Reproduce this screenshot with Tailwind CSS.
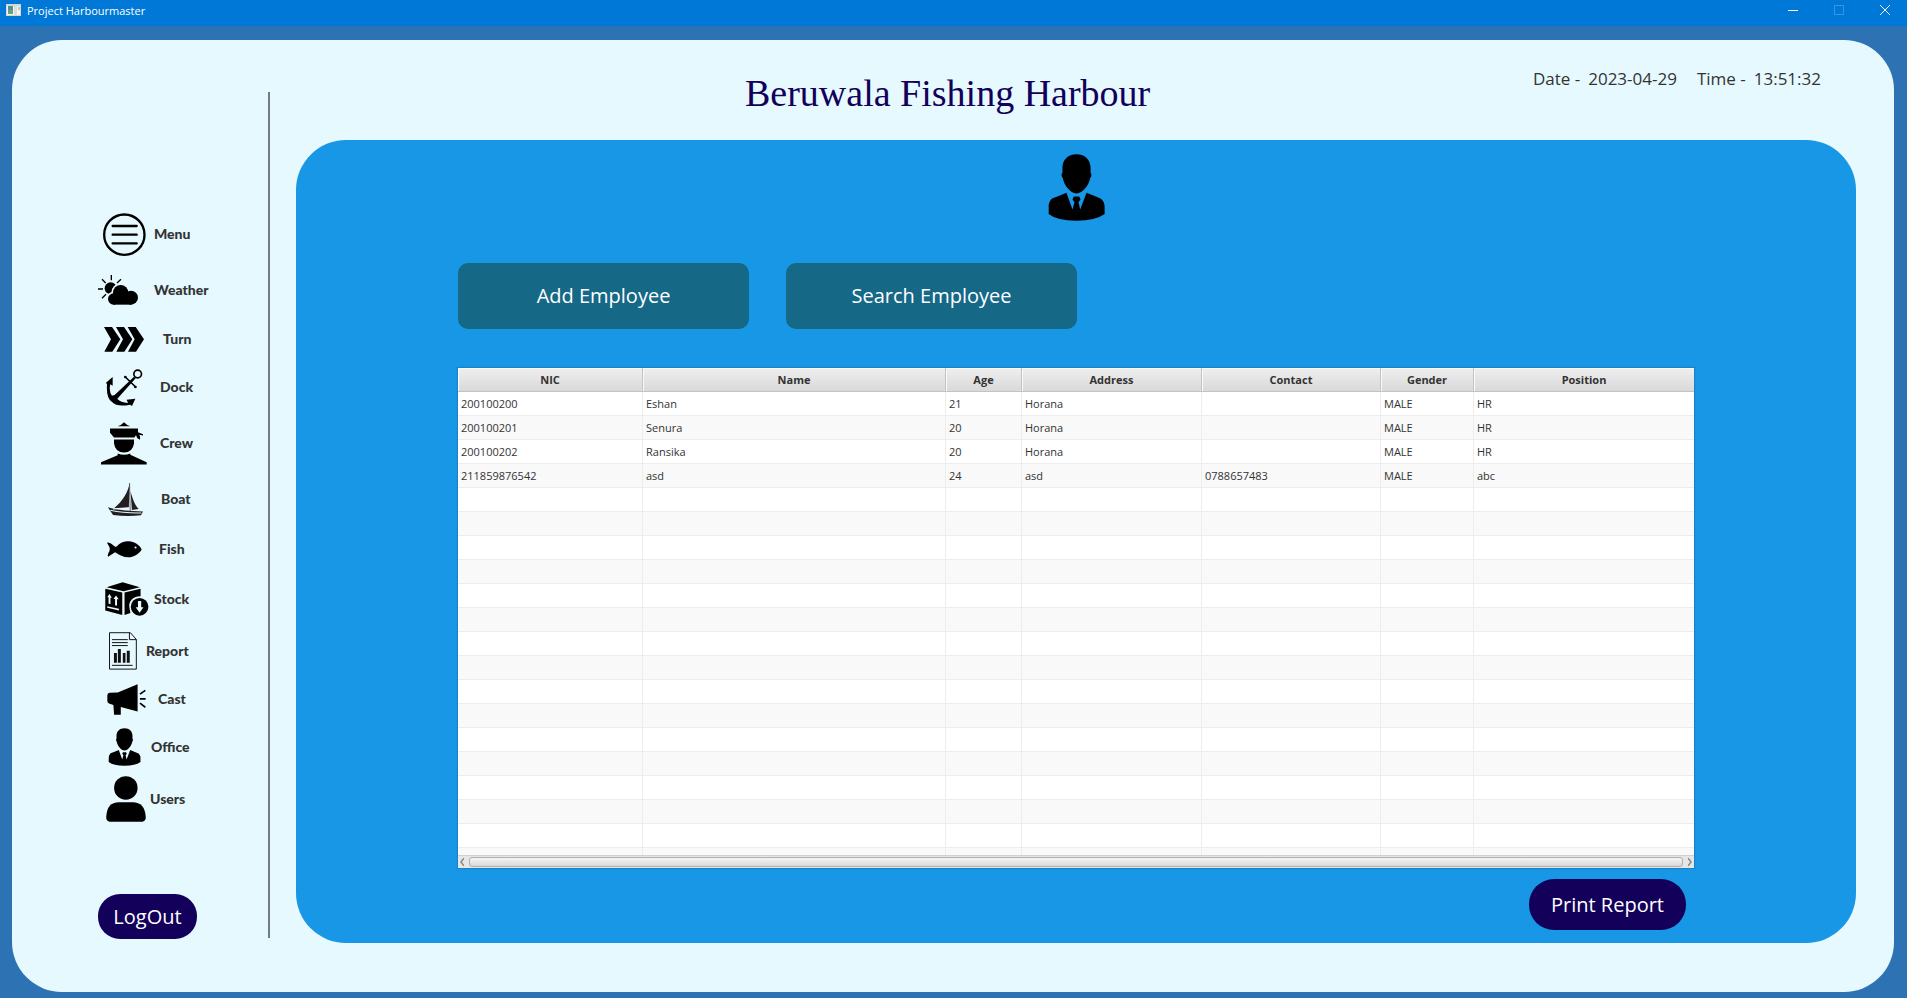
<!DOCTYPE html>
<html lang="en">
<head>
<meta charset="utf-8">
<title>Project Harbourmaster</title>
<script src="https://cdn.jsdelivr.net/npm/@tailwindcss/browser@4"></script>
</head>
<body class="h-screen flex flex-col overflow-hidden bg-[#2d73b4] font-['Open_Sans',sans-serif] text-[#333]">

<svg class="hidden" aria-hidden="true">
  <symbol id="businessman" viewBox="983 281 170 200">
    <path d="M1068 282c27 0 42 18 42 40v16c4 2 3 10-1 15-4 22-22 45-41 46-19-1-37-24-41-46-4-5-5-13-1-15v-16c0-22 15-40 42-40z"/>
    <path d="M1038 397L1056 447 1062 425 1056 417 1060 408H1076L1080 417 1074 425 1079 447 1098 397Q1125 408 1142 415 1152 424 1152 440V460Q1125 480 1068 480 1010 480 985 460V440Q984 424 995 414 1015 407 1038 397z"/>
  </symbol>
</svg>

<header class="h-[26px] shrink-0 flex items-start bg-[#0078d7] text-white pl-[6px] pr-[12px]">
  <svg class="w-[15px] h-[12px] mt-1" viewBox="0 0 15 12"><path fill="#d8d4d0" d="M0 0h15v12H0z"/><path fill="#f4f4f4" d="M1 2h13v9H1z"/><path fill="#4f8fa0" d="M2 2h5v4H2z"/><path fill="#5fa777" d="M2 6h5v4H2z"/><path fill="#dcdcdc" d="M8 2h3v9H8z"/><path fill="#a9d3b4" d="M12 3h2v3h-2z"/></svg>
  <span class="ml-[6px] text-[11px] leading-[22px]">Project Harbourmaster</span>
  <div class="ml-auto flex">
    <button aria-label="Minimize" class="w-[46px] h-5 flex items-center justify-center"><svg class="w-[10px] h-[10px]" viewBox="0 0 10 10"><path stroke="#fff" d="M0 5.500h10"/></svg></button>
    <button aria-label="Maximize" disabled class="w-[46px] h-5 flex items-center justify-center"><svg class="w-[10px] h-[10px]" viewBox="0 0 10 10"><path fill="none" stroke="#3a96e2" d="M.5.5h9v9h-9z"/></svg></button>
    <button aria-label="Close" class="w-[46px] h-5 -mr-[13px] flex items-center justify-center"><svg class="w-[10px] h-[10px]" viewBox="0 0 10 10"><path stroke="#fff" d="M0 0l10 10M10 0L0 10"/></svg></button>
  </div>
</header>

<main class="flex-1 min-h-0 mt-[14px] mb-[6px] ml-3 mr-[13px] flex rounded-[50px] bg-[#e6f9fe]">
  <aside class="w-[256px] shrink-0 flex flex-col items-start pt-[166px] pl-[86px]">
    <nav class="flex flex-col font-['Lato',sans-serif] font-black text-sm text-[#333]">
      <a href="#" class="h-[56px] flex items-center"><svg class="ml-[5px] w-[43px] h-[43px]" viewBox="70 38 129 129" fill="none" stroke="#000"><circle cx="134" cy="103" r="60.500" stroke-width="7"/><path stroke-width="7" stroke-linecap="round" d="M99 77h72M99 103h72M99 129h72"/></svg><span class="ml-2">Menu</span></a>
      <a href="#" class="h-[56px] flex items-center"><svg class="w-[40px] h-[30px]" viewBox="54 219 120 90"><circle cx="92" cy="259" r="18"/><path stroke="#000" stroke-width="4" d="M94 219v16M66 232l11 11M54 261h15M66 289l12-12M123 232l-12 11"/><g stroke="#e6f9fe" stroke-width="10"><circle cx="101" cy="291" r="17"/><circle cx="122" cy="272" r="23"/><circle cx="153" cy="287" r="20"/></g><circle cx="101" cy="291" r="17"/><circle cx="122" cy="272" r="23"/><circle cx="153" cy="287" r="21"/><path d="M100 275h55v33h-55z"/></svg><span class="ml-4">Weather</span></a>
      <a href="#" class="h-[42px] flex items-center"><svg class="ml-[6px] w-[40px] h-[25px]" viewBox="72 378 120 75"><path d="M72 378H96L121 415 97 452H73L93 415zM108 378H132L157 415 133 452H109L129 415zM143 378H167L192 415 168 452H144L164 415z"/></svg><span class="ml-[19px]">Turn</span></a>
      <a href="#" class="h-[54px] flex items-center"><svg class="ml-2 w-[37px] h-[37px]" viewBox="78 38 111 111"><circle cx="173" cy="53" r="11.500" fill="none" stroke="#000" stroke-width="5"/><path d="M162 61L167 66 120 118 112 128Q122 138 144 140L140 130 166 127 156 149 150 145Q112 153 97 138 78 128 81 84L78 79 98 62V88L91 84Q86 105 96 118L104 116z"/><path stroke="#000" stroke-width="5" stroke-linecap="round" d="M136 62l31 30"/><circle cx="136" cy="62" r="4"/><circle cx="166" cy="92" r="4"/></svg><span class="ml-[17px]">Dock</span></a>
      <a href="#" class="h-[58px] flex items-center"><svg class="ml-[3px] w-[46px] h-[43px]" viewBox="63 200 138 128"><path d="M113 212Q124 209 132 200 140 209 151 212zM90 219H174V230L189 236V240L178 238Q182 244 180 253L172 248 168 239 163 246H102L90 232zM102 252H162V264Q158 291 132 291 106 291 102 264zM113 294Q132 302 151 294V298L200 320V327H63V320L113 299z"/></svg><span class="ml-[13px]">Crew</span></a>
      <a href="#" class="h-[54px] flex items-center"><svg class="ml-[10px] w-[35px] h-[33px]" viewBox="85 385 104 98" fill="#231f20"><path d="M149 385C146 410 128 440 103 460L147 457zM152 410C158 430 164 450 176 462L156 465zM85 457L98 461Q130 468 189 470L183 481Q140 485 100 480L88 462z"/><path fill="none" stroke="#231f20" stroke-width="2" d="M149 385l2 83"/><path fill="none" stroke="#e6f9fe" stroke-width="3" d="M92 466q40 9 92 8M100 462l46-2"/></svg><span class="ml-[18px]">Boat</span></a>
      <a href="#" class="h-[46px] flex items-center"><svg class="ml-[9px] w-[35px] h-[17px]" viewBox="84 62 103 50"><path d="M110 80C125 66 135 63 148 63 165 63 180 74 186 87 180 98 165 110 147 110 132 110 120 103 108 95L87 108Q84 104 91 92 94 87 91 80L84 67Q90 64 104 76z"/><circle cx="168" cy="81" r="3" fill="#e6f9fe"/></svg><span class="ml-[17px]">Fish</span></a>
      <a href="#" class="h-[54px] flex items-center"><svg class="ml-[7px] w-[44px] h-[34px]" viewBox="75 185 133 104"><path d="M79 201L128 186 181 201 131 213zM75 206L127 217V286L75 272zM134 217L183 206V229C160 228 145 245 149 264L152 280 134 286z"/><path fill="#e6f9fe" d="M88 222L95 233H91V253L85 251V232H81zM108 226L116 238H111V258L105 256V237H100zM81 259L117 267V272L81 264z"/><circle cx="180" cy="261" r="27"/><path fill="#e6f9fe" d="M175 243H185V262H192L180 279 168 262H175z"/></svg><span class="ml-[5px]">Stock</span></a>
      <a href="#" class="h-[50px] flex items-center"><svg class="ml-[11px] w-[28px] h-[38px]" viewBox="87 336 85 114"><path fill="none" stroke="#111" stroke-width="3" d="M88.500 337.500H152L170 358V448H88.500zM149 338V358.500H170M96 358.500h48M96 367.500h48M96 376.500h48M96 436.500h63"/><path fill="#111" d="M102 399h9v30h-9zM114 387h9v42h-9zM129 399h8v30h-8zM141 392h9v37h-9z"/></svg><span class="ml-[9px]">Report</span></a>
      <a href="#" class="h-[46px] flex items-center"><svg class="ml-[9px] w-[39px] h-[31px]" viewBox="80 28 116 92"><path d="M171 29V110L121 96V119H101L99 90 86 86Q81 84 81 78V62Q81 55 88 54L112 53z"/><path stroke="#000" stroke-width="5" d="M178 58l16-11M178 72h17M178 85l16 12"/></svg><span class="ml-3">Cast</span></a>
      <a href="#" class="h-[50px] flex items-center"><svg class="ml-[10px] w-[33px] h-[38px]"><use href="#businessman"/></svg><span class="ml-[10px]">Office</span></a>
      <a href="#" class="h-[54px] flex items-center"><svg class="ml-2 w-[40px] h-[46px]" viewBox="78 302 119 139"><circle cx="137" cy="338" r="35.500"/><path d="M78 424Q80 381 116 381H158Q194 381 197 424V431Q196 437 188 440H87Q79 437 78 431z"/></svg><span class="ml-1">Users</span></a>
    </nav>
    <button class="mt-[68px] w-[99px] h-[45px] rounded-[22px] bg-[#13005a] text-white text-xl">LogOut</button>
  </aside>
  <div class="w-[2px] shrink-0 mt-[52px] mb-[54px] bg-[#727c7f]"></div>

  <section class="flex-1 min-w-0 flex flex-col ml-[26px] mr-[38px] mb-[49px]">
    <div class="h-[100px] shrink-0 flex justify-between pl-[449px] pr-[35px]">
      <h1 class="font-['Liberation_Serif',serif] text-[38px] leading-[44px] mt-[31px] text-[#13005a]">Beruwala Fishing Harbour</h1>
      <div class="flex mt-[27px] text-[17px] leading-6">
        <span>Date -</span><span class="ml-2">2023-04-29</span>
        <span class="ml-5">Time -</span><span class="ml-2">13:51:32</span>
      </div>
    </div>

    <div class="flex-1 min-h-0 flex flex-col rounded-[50px] bg-[#1797e6] px-[162px] pt-[14px] pb-[13px]">
      <svg class="w-[57px] h-[67px] shrink-0 self-center"><use href="#businessman"/></svg>
      <div class="flex gap-[37px] mt-[42px] text-xl text-white">
        <button class="w-[291px] h-[66px] rounded-[10px] bg-[#156886]">Add Employee</button>
        <button class="w-[291px] h-[66px] rounded-[10px] bg-[#156886]">Search Employee</button>
      </div>

      <div class="mt-[39px] flex-1 min-h-0 flex flex-col bg-white shadow-[0_0_1px_1px_#1585c8]">
        <div class="flex-1 min-h-0 overflow-hidden">
          <table class="w-full table-fixed border-separate border-spacing-0 text-[11px] leading-[23px]
            [&_th]:h-6 [&_th]:p-0 [&_th]:border-b [&_th]:border-r [&_th]:border-[#c3c3c3] [&_th]:bg-linear-to-b [&_th]:from-[#efefef] [&_th]:to-[#d9d9d9] [&_th]:shadow-[inset_1px_1px_0_#f9f9f9]
            [&_td]:h-6 [&_td]:py-0 [&_td]:px-[3px] [&_td]:border-b [&_td]:border-r [&_td]:border-[#ededed]
            [&_th:last-child]:border-r-0 [&_td:last-child]:border-r-0 [&_tbody_tr:nth-child(even)]:bg-[#f9f9f9]">
            <colgroup><col class="w-[185px]"><col class="w-[303px]"><col class="w-[76px]"><col class="w-[180px]"><col class="w-[179px]"><col class="w-[93px]"><col class="w-[220px]"></colgroup>
            <thead><tr><th>NIC</th><th>Name</th><th>Age</th><th>Address</th><th>Contact</th><th>Gender</th><th>Position</th></tr></thead>
            <tbody id="rows">
              <tr><td>200100200</td><td>Eshan</td><td>21</td><td>Horana</td><td></td><td>MALE</td><td>HR</td></tr>
              <tr><td>200100201</td><td>Senura</td><td>20</td><td>Horana</td><td></td><td>MALE</td><td>HR</td></tr>
              <tr><td>200100202</td><td>Ransika</td><td>20</td><td>Horana</td><td></td><td>MALE</td><td>HR</td></tr>
              <tr><td>211859876542</td><td>asd</td><td>24</td><td>asd</td><td>0788657483</td><td>MALE</td><td>abc</td></tr>
            </tbody>
          </table>
        </div>
        <div class="h-[13px] shrink-0 flex items-center gap-[5px] px-[2px] border-t border-[#d0d0d0] bg-[#e6e6e6]">
          <svg class="w-1 h-2" viewBox="0 0 4 8" fill="none" stroke="#888" stroke-width="1.500"><path d="M4 0L1 4l3 4"/></svg>
          <div class="flex-1 h-[10px] rounded-[3px] border border-[#b0b0b0] bg-linear-to-b from-[#f4f4f4] to-[#d8d8d8]"></div>
          <svg class="w-1 h-2" viewBox="0 0 4 8" fill="none" stroke="#888" stroke-width="1.500"><path d="M0 0l3 4-3 4"/></svg>
        </div>
      </div>

      <button class="mt-[11px] mr-2 self-end w-[157px] h-[51px] shrink-0 rounded-[25px] bg-[#13005a] text-white text-xl">Print Report</button>
    </div>
  </section>
</main>

<script>
  // Pad the grid with blank rows below the data
  const rows = document.getElementById('rows');
  while (rows.rows.length < 24) {
    const tr = rows.insertRow();
    for (let i = 0; i < 7; i++) tr.insertCell();
  }
</script>
</body>
</html>
